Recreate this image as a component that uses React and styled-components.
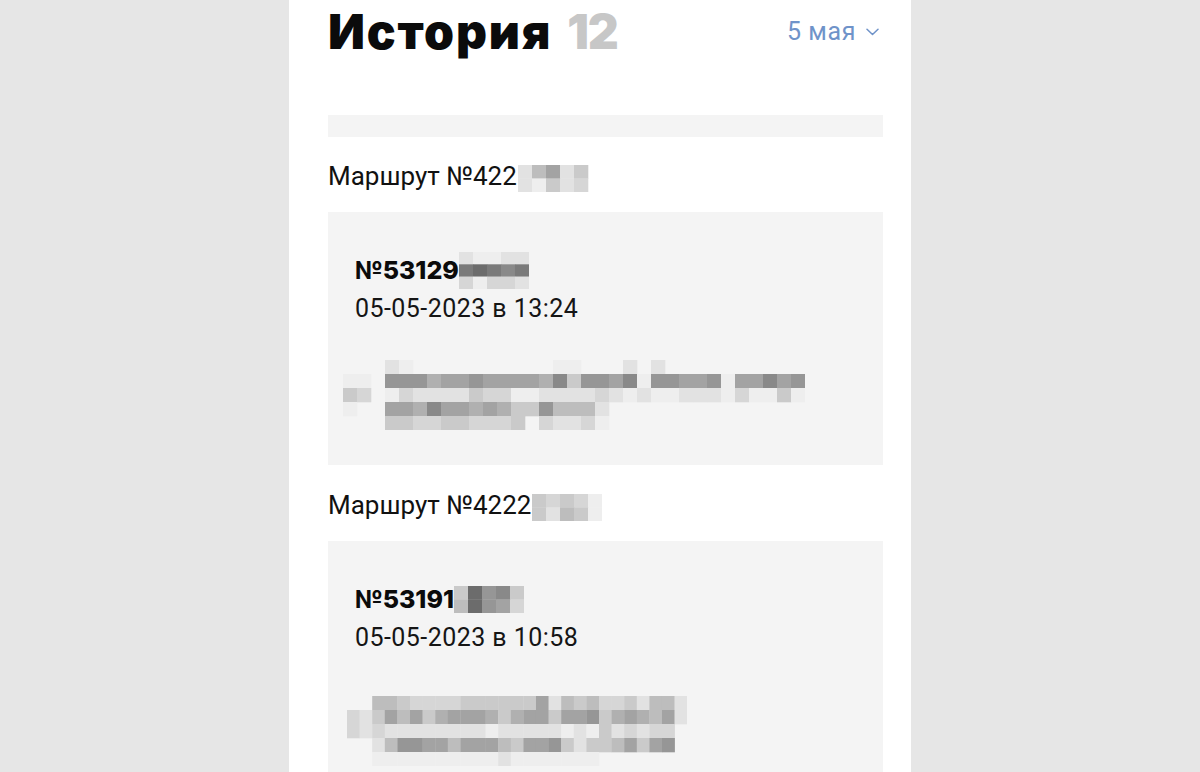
import React from 'react';
import styled, { createGlobalStyle } from 'styled-components';

const GlobalStyle = createGlobalStyle`
  html, body { margin: 0; padding: 0; background: #e6e6e6; }
  body { font-family: Roboto, "Noto Sans", sans-serif; color: #111; }
`;

const Page = styled.div`
  display: flex;
  justify-content: center;
  height: 772px;
  overflow: hidden;
`;

const Panel = styled.main`
  width: 622px;
  box-sizing: border-box;
  background: #fff;
  padding: 3px 28px 0 39px;
  height: 772px;
  overflow: hidden;
`;

const Header = styled.header`
  display: flex;
  align-items: center;
  justify-content: space-between;
  height: 58px;
`;

const Title = styled.h1`
  margin: 0;
  font-family: Inter, "Noto Sans", sans-serif;
  font-weight: 900;
  font-size: 48px;
  line-height: 58px;
  color: #0b0b0b;
  letter-spacing: 1.8px;
`;

const Count = styled.span`
  color: #c7c7c7;
  margin-left: 15px;
  letter-spacing: -1px;
`;

const DateSelect = styled.button`
  display: flex;
  align-items: center;
  gap: 10px;
  border: 0;
  background: none;
  padding: 0;
  margin-right: 4px;
  font-family: Roboto, sans-serif;
  font-size: 25px;
  line-height: 30px;
  letter-spacing: 0.6px;
  color: #6f93c9;
  cursor: pointer;
`;

const Bar = styled.div`
  margin-top: 54px;
  height: 22px;
  background: #f4f4f4;
`;

const List = styled.div`
  margin-top: 22px;
  display: flex;
  flex-direction: column;
  gap: 23px;
`;

const RouteLabel = styled.div`
  display: flex;
  align-items: center;
  height: 34px;
  font-size: 26px;
  line-height: 34px;
  margin-bottom: 19px;
  color: #111;
`;

const Card = styled.div`
  background: #f4f4f4;
  padding: 43px 27px 35px;
`;

const OrderNo = styled.div`
  display: flex;
  align-items: center;
  height: 30px;
  font-family: Inter, "Noto Sans", sans-serif;
  font-weight: 800;
  font-size: 25px;
  line-height: 30px;
  color: #0b0b0b;
`;

const OrderDate = styled.div`
  margin-top: 9px;
  font-size: 25px;
  line-height: 30px;
  letter-spacing: 0.45px;
  color: #151515;
`;

const Blur = styled.svg`
  display: block;
  flex: none;
  margin-top: ${(p) => p.$mt || 0}px;
  margin-left: ${(p) => p.$ml || 0}px;
`;

const palette = {
  '1': '#eeeeee',
  '2': '#e2e2e2',
  '3': '#d6d6d6',
  '4': '#cacaca',
  '5': '#bdbdbd',
  '6': '#b0b0b0',
  '7': '#a3a3a3',
  '8': '#969696',
  '9': '#898989',
  a: '#7a7a7a',
  b: '#6c6c6c',
};

function Mosaic({ rows, bw, bh, mt, ml }) {
  const cols = Math.max(...rows.map((r) => r.length));
  const w = cols * bw;
  const h = rows.length * bh;
  return (
    <Blur $mt={mt} $ml={ml} width={w} height={h} viewBox={`0 0 ${w} ${h}`}>
      {rows.map((r, y) =>
        r.split('').map((c, x) =>
          c === '.' ? null : (
            <rect key={`${x}-${y}`} x={x * bw} y={y * bh} width={bw + 0.3} height={bh + 0.3} fill={palette[c]} />
          )
        )
      )}
    </Blur>
  );
}

const routes = [
  {
    label: 'Маршрут №422',
    labelBlur: ['25724.', '21423.'],
    no: '№53129',
    noBlur: ['21122', 'aba9a', '31332'],
    noBh: 12.3,
    date: '05-05-2023 в 13:24',
    addr: {
      rows: [
        '...21..........11...2.2..........',
        '11.888677877776948879188778177978',
        '43.132222433112222321211222131141',
        '1..7769776764485552..............',
        '...4433443334.32231..............',
      ],
      bw: 14,
      bh: 14,
      mt: 36,
      ml: -12,
    },
  },
  {
    label: 'Маршрут №4222',
    labelBlur: ['43431', '42541'],
    no: '№53191',
    noBlur: ['4b894', '5b873'],
    noBh: 13.5,
    date: '05-05-2023 в 10:58',
    addr: {
      rows: [
        '..5543333444444725453342552',
        '324757467776467747784676572',
        '32322222222122222121423233.',
        '..258877577754778424457478.',
        '..111111111121111111.......',
      ],
      bw: 12.6,
      bh: 14,
      mt: 43,
      ml: -8,
    },
  },
];

function Chevron() {
  return (
    <svg width="13" height="8" viewBox="0 0 13 8" fill="none">
      <path d="M1 1.2l5.5 5.3L12 1.2" stroke="#6f93c9" strokeWidth="1.5" strokeLinecap="round" strokeLinejoin="round" />
    </svg>
  );
}

export default function App() {
  return (
    <>
      <GlobalStyle />
      <Page>
        <Panel>
          <Header>
            <Title>
              История<Count>12</Count>
            </Title>
            <DateSelect>
              5 мая
              <Chevron />
            </DateSelect>
          </Header>
          <Bar />
          <List>
            {routes.map((r) => (
              <section key={r.no}>
                <RouteLabel>
                  {r.label}
                  <Mosaic rows={r.labelBlur} bw={14} bh={13.5} ml={1} mt={4} />
                </RouteLabel>
                <Card>
                  <OrderNo>
                    {r.no}
                    <Mosaic rows={r.noBlur} bw={14} bh={r.noBh} mt={1} />
                  </OrderNo>
                  <OrderDate>{r.date}</OrderDate>
                  <Mosaic rows={r.addr.rows} bw={r.addr.bw} bh={r.addr.bh} mt={r.addr.mt} ml={r.addr.ml} />
                </Card>
              </section>
            ))}
          </List>
        </Panel>
      </Page>
    </>
  );
}
